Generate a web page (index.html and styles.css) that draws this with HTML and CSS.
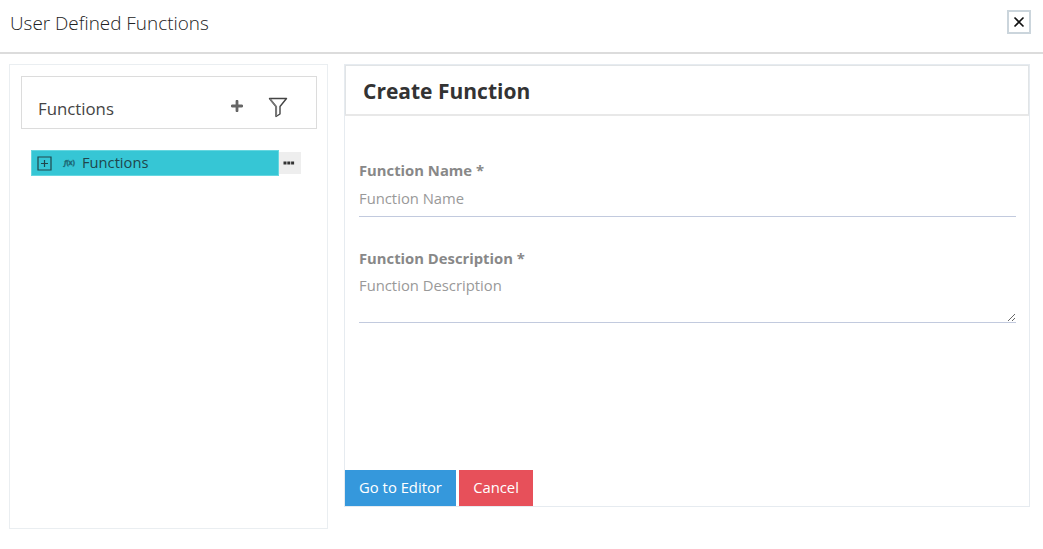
FILE: index.html
```html
<!DOCTYPE html>
<html lang="en">
<head>
<meta charset="utf-8">
<title>User Defined Functions</title>
<link rel="stylesheet" href="styles.css">
</head>
<body>
<header class="topbar">
  <h1 class="title">User Defined Functions</h1>
  <button class="close" aria-label="Close">
    <svg width="12" height="12" viewBox="0 0 12 12"><path d="M1.5 1.5 10.5 10.5M10.5 1.5 1.5 10.5" stroke="#111" stroke-width="1.6" fill="none"/></svg>
  </button>
</header>
<main class="content">
  <aside class="sidebar">
    <div class="tools">
      <span class="tools-label">Functions</span>
      <svg class="add" width="12" height="12" viewBox="0 0 12 12"><path d="M6 1.2V10.8M1.2 6H10.8" stroke="#666" stroke-width="2.8" stroke-linecap="round"/></svg>
      <svg class="filter" width="20" height="21" viewBox="0 0 20 21"><path d="M1.5 1.5H18.5L12 9.5V17L8 19.5V9.5Z" fill="none" stroke="#444" stroke-width="1.4" stroke-linejoin="round"/><path d="M2 2 8.3 9.8V19" fill="none" stroke="#777" stroke-width="1.6"/></svg>
    </div>
    <div class="tree-row">
      <div class="node">
        <svg width="15" height="15" viewBox="0 0 15 15"><path d="M1 1H14V14H1ZM7.5 4V11M4 7.5H11" fill="none" stroke="#20464c" stroke-width="1.2"/></svg>
        <span class="fx"><i>f</i>(x)</span>
        <span class="node-label">Functions</span>
      </div>
      <button class="more" aria-label="More">
        <svg width="12" height="4" viewBox="0 0 12 4"><path d="M.5.5h3v3h-3zM4.3.5h3v3h-3zM8.1.5h3v3h-3z" fill="#333"/></svg>
      </button>
    </div>
  </aside>
  <section class="panel">
    <h2 class="panel-title">Create Function</h2>
    <form class="form">
      <label class="label" for="name">Function Name *</label>
      <input class="input" id="name" placeholder="Function Name">
      <label class="label label-next" for="desc">Function Description *</label>
      <textarea class="input area" id="desc" placeholder="Function Description"></textarea>
    </form>
    <div class="actions">
      <button class="btn primary">Go to Editor</button>
      <button class="btn danger">Cancel</button>
    </div>
  </section>
</main>
</body>
</html>
```
FILE: styles.css
```css
* { box-sizing: border-box; }
body { margin: 0; background: #fff; font-family: "Open Sans", sans-serif; color: #333; overflow: hidden; }
button { font-family: inherit; border: 0; padding: 0; display: flex; align-items: center; justify-content: center; }
svg { display: block; }

.topbar { height: 54px; border-bottom: 2px solid #dcdcdc; display: flex; justify-content: space-between; align-items: flex-start; padding: 10px 12px 0 10px; }
.title { margin: 0; font-size: 18.9px; line-height: 26px; font-weight: 300; color: #222; }
.close { width: 24px; height: 24px; border: 2px solid #cbd5dc; background: #fff; }

.content { display: flex; align-items: flex-start; gap: 16px; padding: 10px 13px 0 9px; }
.sidebar { width: 319px; height: 465px; border: 1px solid #eaeef1; padding: 11px 10px 0 11px; }
.tools { height: 53px; width: 296px; border: 1px solid #dcdcdc; display: flex; align-items: flex-start; padding: 0 28px 0 16px; }
.tools-label { font-size: 16.8px; line-height: 24px; margin-top: 20px; width: 193px; color: #444; }
.add { margin-top: 23px; }
.filter { margin: 20px 0 0 25px; }

.tree-row { display: flex; align-items: center; margin: 21px 0 0 10px; }
.node { width: 248px; height: 26px; background: #36c6d5; border: 1px solid #65d7e0; display: flex; align-items: center; padding: 0 5px; }
.fx { width: 16px; margin: 0 2px 0 12px; font: bold 7px/10px "Open Sans", sans-serif; letter-spacing: -.2px; color: #1c6673; -webkit-text-stroke: .3px #1c6673; }
.node-label { font-size: 14.7px; line-height: 22px; color: #20464c; margin-top: -2px; }
.more { width: 22px; height: 22px; background: #eee; padding-right: 2px; }

.panel { width: 686px; height: 443px; border: 1px solid #e6ebf0; display: flex; flex-direction: column; }
.panel-title { margin: 0; height: 51px; border: 1px solid #e1e4e6; border-bottom: 2px solid #e8e8e8; padding: 11px 17px 9px; font-size: 21px; line-height: 29px; font-weight: 700; color: #333; }
.form { flex: 1; padding: 43px 13px 0 14px; display: flex; flex-direction: column; }
.label { font-size: 14.8px; line-height: 22px; font-weight: 700; color: #888; }
.label-next { margin-top: 30px; }
.input { width: 100%; height: 36px; margin: 0; padding: 0 0 2px; border: 0; border-bottom: 1px solid #c2cade; border-radius: 0; outline: 0; background: transparent; font: 14.8px/20px "Open Sans", sans-serif; color: #555; }
.input::placeholder { color: #999; opacity: 1; }
.area { height: 54px; padding-top: 6px; resize: both; overflow: hidden; }
.actions { display: flex; gap: 3px; }
.btn { height: 36px; padding-bottom: 2px; font-size: 14.8px; color: #fff; }
.primary { width: 111px; background: #3598dc; }
.danger { width: 74px; background: #e7505a; }
```
